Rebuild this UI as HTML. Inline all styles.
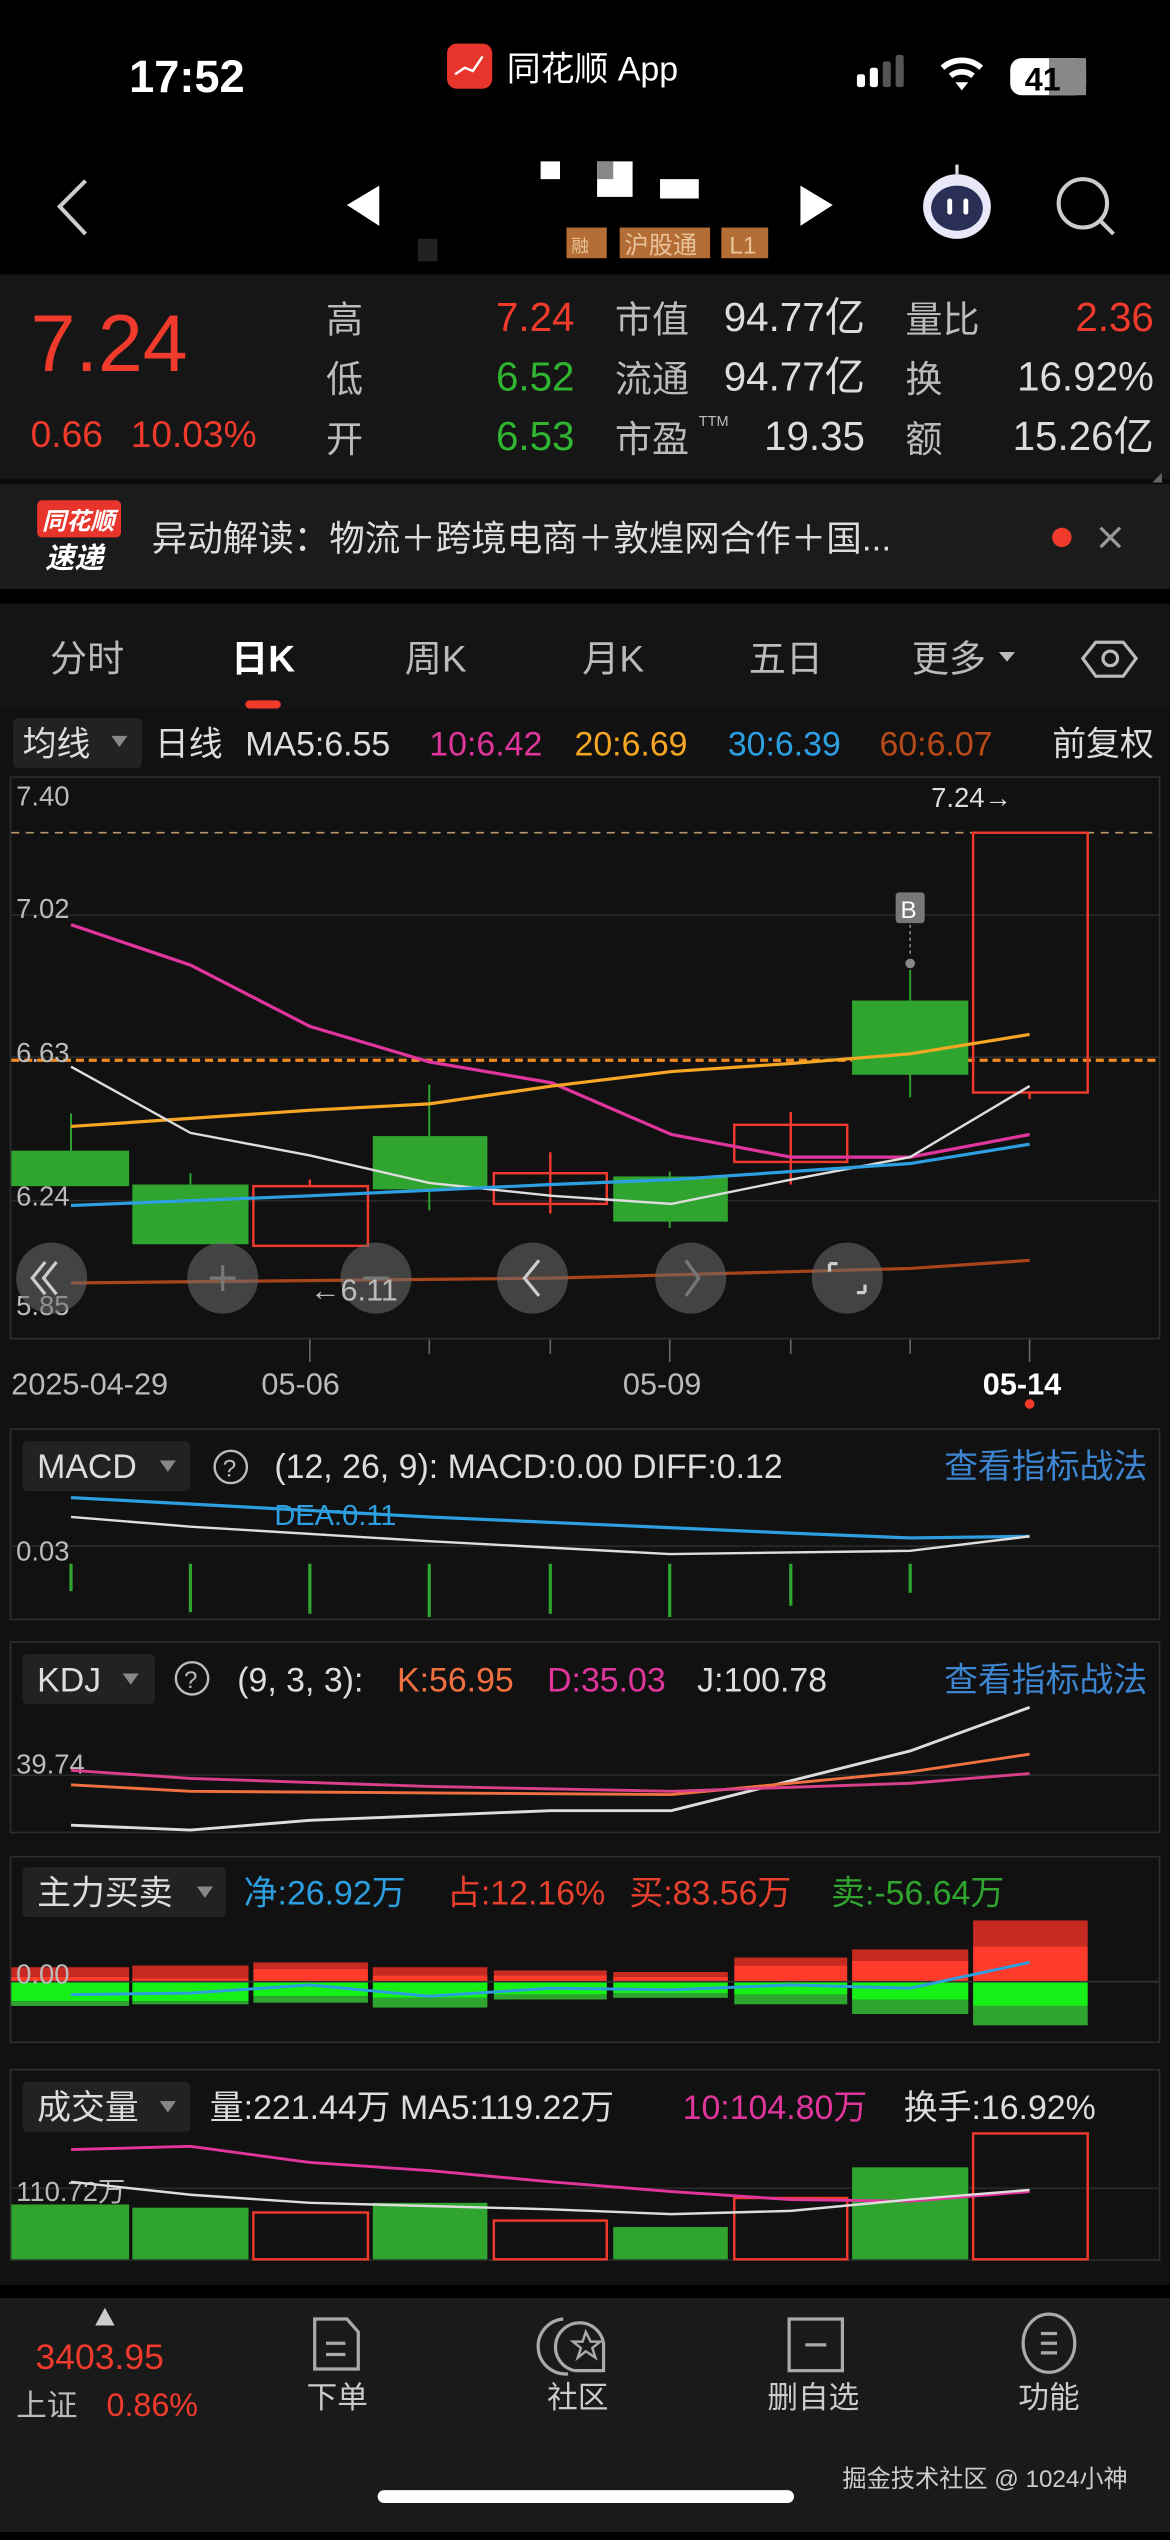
<!DOCTYPE html>
<html><head><meta charset="utf-8">
<style>
html,body{margin:0;padding:0;background:#000;}
body{width:1170px;height:2532px;overflow:hidden;position:relative;}
#w{position:absolute;left:0;top:0;width:725px;height:1569px;transform:scale(1.61379);transform-origin:0 0;}
svg text{font-family:"Liberation Sans","Noto Sans CJK SC",sans-serif;}
</style></head><body><div id="w">
<svg width="725" height="1569" viewBox="0 0 725 1569" xmlns="http://www.w3.org/2000/svg">
<rect width="725" height="1569" fill="#000"/>
<!-- status bar -->
<text x="80" y="57" font-size="28" font-weight="bold" fill="#fff">17:52</text>
<rect x="277" y="27" width="28" height="28" rx="6" fill="#e8352b"/>
<path d="M282 46 L288 42 L293 44 L299 35" stroke="#fff" stroke-width="1.5" fill="none"/>
<text x="314" y="50" font-size="21" fill="#fff">同花顺 App</text>
<rect x="531" y="46" width="5" height="8" rx="1.5" fill="#fff"/>
<rect x="539" y="42" width="5" height="12" rx="1.5" fill="#fff"/>
<rect x="547" y="38" width="5" height="16" rx="1.5" fill="#555"/>
<rect x="555" y="34" width="5" height="20" rx="1.5" fill="#555"/>
<path d="M584 42 A18 18 0 0 1 608 42" stroke="#fff" stroke-width="3.5" fill="none"/>
<path d="M589 47 A11 11 0 0 1 603 47" stroke="#fff" stroke-width="3.5" fill="none"/>
<path d="M592 51 L596 56 L600 51 Z" fill="#fff"/>
<rect x="626" y="36" width="47" height="23" rx="7" fill="#fff"/>
<rect x="650" y="36" width="23" height="23" fill="#888"/>
<text x="635" y="56" font-size="20" font-weight="bold" fill="#000">41</text>
<!-- nav -->
<path d="M53 112 L37 128 L53 145" stroke="#ccc" stroke-width="2.5" fill="none"/>
<path d="M235 115 L215 127 L235 140 Z" fill="#fff"/>
<path d="M496 115 L516 127 L496 140 Z" fill="#fff"/>
<rect x="335" y="100" width="12" height="11" fill="#fff"/>
<rect x="370" y="100" width="22" height="22" fill="#fff"/><rect x="370" y="100" width="10" height="11" fill="#888"/>
<rect x="409" y="111" width="24" height="12" fill="#fff"/>
<rect x="259" y="148" width="12" height="14" fill="#222"/>
<rect x="351" y="141" width="25" height="19" fill="#b46d34"/><text x="354" y="156" font-size="11" fill="#e8c39b">融</text>
<rect x="384" y="141" width="56" height="19" fill="#b46d34"/><text x="387" y="157" font-size="15" fill="#e8c39b">沪股通</text>
<rect x="447" y="141" width="29" height="19" fill="#b46d34"/><text x="452" y="157" font-size="15" fill="#e8c39b">L1</text>
<ellipse cx="593" cy="128" rx="21" ry="20" fill="#e8e8f8"/>
<ellipse cx="593" cy="129" rx="16" ry="14" fill="#2a3055"/>
<rect x="587" y="123" width="3" height="10" rx="1.5" fill="#fff"/><rect x="597" y="123" width="3" height="10" rx="1.5" fill="#fff"/>
<path d="M593 108 L593 102" stroke="#ddd" stroke-width="2"/>
<circle cx="671" cy="126" r="15" stroke="#ccc" stroke-width="2.5" fill="none"/>
<path d="M682 137 L690 145" stroke="#ccc" stroke-width="2.5"/>
<!-- quote panel -->
<rect x="0" y="170" width="725" height="128" fill="#161616"/>
<rect x="0" y="297" width="725" height="3" fill="#0a0a0a"/>
<text x="19" y="230" font-size="50" fill="#f03a2c">7.24</text>
<text x="19" y="277" font-size="23" fill="#f03a2c">0.66</text>
<text x="81" y="277" font-size="23" fill="#f03a2c">10.03%</text>
<g font-size="23" fill="#bbb"><text x="202" y="206">高</text><text x="202" y="243">低</text><text x="202" y="280">开</text>
<text x="381" y="206">市值</text><text x="381" y="243">流通</text><text x="381" y="280">市盈</text>
<text x="561" y="206">量比</text><text x="561" y="243">换</text><text x="561" y="280">额</text></g>
<text x="433" y="264" font-size="9" fill="#bbb">TTM</text>
<g font-size="25" text-anchor="end"><text x="356" y="205" fill="#f03a2c">7.24</text><text x="356" y="242" fill="#2fb52f">6.52</text><text x="356" y="279" fill="#2fb52f">6.53</text>
<text x="536" y="205" fill="#ddd">94.77亿</text><text x="536" y="242" fill="#ddd">94.77亿</text><text x="536" y="279" fill="#ddd">19.35</text>
<text x="715" y="205" fill="#f03a2c">2.36</text><text x="715" y="242" fill="#ddd">16.92%</text><text x="715" y="279" fill="#ddd">15.26亿</text></g>
<path d="M720 293 L714 299 L720 299 Z" fill="#666"/>
<!-- news -->
<rect x="0" y="300" width="725" height="65" fill="#1b1b1b"/>
<rect x="23" y="310" width="52" height="23" rx="3" fill="#e8352b"/>
<text x="26" y="328" font-size="15" font-style="italic" font-weight="bold" fill="#fff">同花顺</text>
<text x="28" y="352" font-size="18" font-style="italic" font-weight="bold" fill="#fff">速递</text>
<text x="94" y="341" font-size="22" fill="#ddd">异动解读：物流＋跨境电商＋敦煌网合作＋国...</text>
<circle cx="658" cy="333" r="6" fill="#f03a2c"/>
<path d="M682 327 L694 339 M694 327 L682 339" stroke="#999" stroke-width="2"/>
<!-- tabs -->
<rect x="0" y="374" width="725" height="66" fill="#141414"/>
<g font-size="23" fill="#bbb" text-anchor="middle"><text x="54" y="416">分时</text><text x="163" y="416" fill="#fff" font-weight="bold">日K</text><text x="270" y="416">周K</text><text x="380" y="416">月K</text><text x="487" y="416">五日</text><text x="588" y="416">更多</text></g>
<path d="M619 404 L629 404 L624 410 Z" fill="#bbb"/>
<path d="M679 398 L696 398 L704 408 L696 419 L679 419 L671 408 Z" stroke="#bbb" stroke-width="2" fill="none"/>
<circle cx="688" cy="408" r="4.5" stroke="#bbb" stroke-width="2" fill="none"/>
<rect x="152" y="434" width="22" height="5" rx="2.5" fill="#f03a2c"/>
<!-- chart area bg -->
<rect x="0" y="440" width="725" height="976" fill="#111"/>
<rect x="8" y="445" width="80" height="31" rx="3" fill="#222"/>
<text x="14" y="468" font-size="21" fill="#ddd">均线</text><path d="M69 456 L79 456 L74 463 Z" fill="#888"/>
<g font-size="21"><text x="96" y="468" fill="#ddd">日线</text><text x="152" y="468" fill="#ddd">MA5:6.55</text><text x="266" y="468" fill="#e0359c">10:6.42</text><text x="356" y="468" fill="#f5a623">20:6.69</text><text x="451" y="468" fill="#2d9fe0">30:6.39</text><text x="545" y="468" fill="#b84a1a">60:6.07</text><text x="652" y="468" fill="#ddd">前复权</text></g>
<rect x="6.5" y="481.5" width="712" height="348" fill="none" stroke="#2e2e2e"/>
<g stroke="#2a2a2a"><line x1="7" y1="567" x2="718" y2="567"/><line x1="7" y1="655" x2="718" y2="655"/><line x1="7" y1="744" x2="718" y2="744"/></g>
<line x1="7" y1="516" x2="718" y2="516" stroke="#b8956a" stroke-dasharray="5,4"/>
<line x1="7" y1="657" x2="718" y2="657" stroke="#f08a20" stroke-width="2" stroke-dasharray="5,3"/>
<g font-size="17" fill="#bbb"><text x="10" y="499">7.40</text><text x="10" y="569">7.02</text><text x="10" y="658">6.63</text><text x="10" y="747">6.24</text><text x="10" y="815">5.85</text></g>
<text x="577" y="500" font-size="17" fill="#ddd">7.24→</text>
<!-- candles -->
<g stroke="#2fa52f" stroke-width="1.2"><line x1="44" y1="690" x2="44" y2="713"/><line x1="118" y1="727" x2="118" y2="734"/><line x1="266" y1="672" x2="266" y2="750"/><line x1="415" y1="726" x2="415" y2="761"/><line x1="564" y1="601" x2="564" y2="680"/></g>
<g fill="#2fa52f"><rect x="7" y="713" width="73" height="22"/><rect x="82" y="734" width="72" height="37"/><rect x="231" y="704" width="71" height="33"/><rect x="380" y="729" width="71" height="28"/><rect x="528" y="620" width="72" height="46"/></g>
<g stroke="#f03a2c" stroke-width="1.5" fill="none"><line x1="192" y1="731" x2="192" y2="735"/><rect x="157" y="735" width="71" height="37"/><line x1="341" y1="714" x2="341" y2="752"/><rect x="306" y="727" width="70" height="19"/><line x1="490" y1="689" x2="490" y2="734"/><rect x="455" y="697" width="70" height="23"/><rect x="603" y="516" width="71" height="161"/><line x1="638" y1="677" x2="638" y2="681"/></g>
<rect x="555" y="553" width="18" height="19" rx="2" fill="#777"/><text x="558" y="569" font-size="15" fill="#fff">B</text>
<line x1="564" y1="573" x2="564" y2="593" stroke="#888" stroke-dasharray="2,2"/><circle cx="564" cy="597" r="3" fill="#888"/>
<!-- MA lines -->
<g fill="none" stroke-width="2">
<polyline stroke="#e0359c" points="44,573 118,598 192,636 266,658 342,671 416,703 490,717 564,717 638,703"/>
<polyline stroke="#f5a623" points="44,698 118,693 192,688 266,684 342,673 416,664 490,659 564,653 638,641"/>
<polyline stroke="#ddd" stroke-width="1.5" points="44,661 118,702 192,716 266,733 342,741 416,746 490,731 564,717 638,673"/>
<polyline stroke="#2d9fe0" points="44,747 192,741 342,734 416,731 564,721 638,709"/>
<polyline stroke="#a8441a" points="44,795 342,792 564,786 638,781"/>
</g>
<!-- overlay buttons -->
<g fill="rgba(110,110,110,0.55)"><circle cx="32" cy="792" r="22"/><circle cx="138" cy="792" r="22"/><circle cx="233" cy="792" r="22"/><circle cx="330" cy="792" r="22"/><circle cx="428" cy="792" r="22"/><circle cx="525" cy="792" r="22"/></g>
<g stroke="#ccc" stroke-width="2" fill="none"><path d="M28 782 L20 792 L28 802 M35 782 L27 792 L35 802"/><path d="M334 781 L325 792 L334 803"/><path d="M514 783 L514 788 M514 783 L519 783 M536 801 L536 796 M536 801 L531 801"/></g>
<g stroke="#777" stroke-width="2" fill="none"><path d="M138 784 L138 800 M130 792 L146 792"/><path d="M425 781 L433 792 L425 803"/><path d="M225 792 L241 792"/></g>
<text x="192" y="806" font-size="19" fill="#bbb">←6.11</text>
<!-- date axis -->
<g stroke="#666"><line x1="192" y1="830" x2="192" y2="844"/><line x1="266" y1="830" x2="266" y2="839"/><line x1="341" y1="830" x2="341" y2="839"/><line x1="415" y1="830" x2="415" y2="844"/><line x1="490" y1="830" x2="490" y2="839"/><line x1="564" y1="830" x2="564" y2="839"/><line x1="638" y1="830" x2="638" y2="844"/></g>
<g font-size="19" fill="#bbb"><text x="7" y="864">2025-04-29</text><text x="162" y="864">05-06</text><text x="386" y="864">05-09</text><text x="609" y="864" fill="#fff" font-weight="bold">05-14</text></g>
<circle cx="638" cy="870" r="3" fill="#f03a2c"/>
<!-- MACD -->
<rect x="6.5" y="885.5" width="712" height="118" fill="none" stroke="#2e2e2e"/>
<line x1="7" y1="958" x2="718" y2="958" stroke="#2a2a2a"/>
<rect x="14" y="893" width="104" height="31" rx="3" fill="#222"/><text x="23" y="916" font-size="21" fill="#ddd">MACD</text><path d="M99 905 L109 905 L104 912 Z" fill="#888"/>
<circle cx="143" cy="909" r="10" stroke="#bbb" stroke-width="1.5" fill="none"/><text x="138" y="915" font-size="15" fill="#bbb">?</text>
<text x="170" y="916" font-size="21" fill="#ddd">(12, 26, 9): MACD:0.00  DIFF:0.12</text>
<text x="585" y="916" font-size="21" fill="#3d85d0">查看指标战法</text>
<polyline fill="none" stroke="#2d9fe0" stroke-width="2" points="44,928 266,940 490,950 564,953 638,952"/>
<polyline fill="none" stroke="#ddd" stroke-width="1.5" points="44,940 118,946 266,955 415,963 564,961 638,952"/>
<text x="170" y="945" font-size="18" fill="#2d9fe0">DEA:0.11</text>
<text x="10" y="967" font-size="17" fill="#bbb">0.03</text>
<g stroke="#2fa52f" stroke-width="2"><line x1="44" y1="969" x2="44" y2="986"/><line x1="118" y1="969" x2="118" y2="999"/><line x1="192" y1="969" x2="192" y2="1000"/><line x1="266" y1="969" x2="266" y2="1002"/><line x1="341" y1="969" x2="341" y2="1000"/><line x1="415" y1="969" x2="415" y2="1002"/><line x1="490" y1="969" x2="490" y2="995"/><line x1="564" y1="969" x2="564" y2="987"/></g>
<!-- KDJ -->
<rect x="6.5" y="1017.5" width="712" height="118" fill="none" stroke="#2e2e2e"/>
<line x1="7" y1="1100" x2="718" y2="1100" stroke="#2a2a2a"/>
<rect x="14" y="1025" width="82" height="31" rx="3" fill="#222"/><text x="23" y="1048" font-size="21" fill="#ddd">KDJ</text><path d="M76 1037 L86 1037 L81 1044 Z" fill="#888"/>
<circle cx="119" cy="1040" r="10" stroke="#bbb" stroke-width="1.5" fill="none"/><text x="114" y="1046" font-size="15" fill="#bbb">?</text>
<text x="147" y="1048" font-size="21" fill="#ddd">(9, 3, 3):</text><text x="246" y="1048" font-size="21" fill="#f07040">K:56.95</text><text x="339" y="1048" font-size="21" fill="#e0359c">D:35.03</text><text x="432" y="1048" font-size="21" fill="#ddd">J:100.78</text>
<text x="585" y="1048" font-size="21" fill="#3d85d0">查看指标战法</text>
<text x="10" y="1099" font-size="17" fill="#bbb">39.74</text>
<g fill="none" stroke-width="1.8"><polyline stroke="#ddd" points="44,1131 118,1134 192,1128 341,1122 416,1122 564,1085 638,1058"/><polyline stroke="#f07040" points="44,1106 118,1110 266,1111 416,1112 564,1098 638,1087"/><polyline stroke="#d8408a" points="44,1097 118,1102 266,1107 416,1110 564,1105 638,1099"/></g>
<!-- 主力 -->
<rect x="6.5" y="1150.5" width="712" height="115" fill="none" stroke="#2e2e2e"/>
<rect x="14" y="1157" width="126" height="31" rx="3" fill="#222"/><text x="23" y="1180" font-size="21" fill="#ddd">主力买卖</text><path d="M122 1169 L132 1169 L127 1176 Z" fill="#888"/>
<g font-size="21"><text x="151" y="1180" fill="#2d9fe0">净:26.92万</text><text x="277" y="1180" fill="#e8402c">占:12.16%</text><text x="390" y="1180" fill="#e8402c">买:83.56万</text><text x="515" y="1180" fill="#2fa52f">卖:-56.64万</text></g>
<g>
<rect x="7" y="1219" width="73" height="6" fill="#c62a20"/><rect x="7" y="1225" width="73" height="3" fill="#ff3b2c"/><rect x="7" y="1228" width="73" height="12" fill="#16f016"/><rect x="7" y="1240" width="73" height="3" fill="#2fa52f"/>
<rect x="82" y="1218" width="72" height="8" fill="#c62a20"/><rect x="82" y="1226" width="72" height="2" fill="#ff3b2c"/><rect x="82" y="1228" width="72" height="12" fill="#16f016"/><rect x="82" y="1240" width="72" height="2" fill="#2fa52f"/>
<rect x="157" y="1216" width="71" height="4" fill="#c62a20"/><rect x="157" y="1220" width="71" height="8" fill="#ff3b2c"/><rect x="157" y="1228" width="71" height="9" fill="#16f016"/><rect x="157" y="1237" width="71" height="4" fill="#2fa52f"/>
<rect x="231" y="1219" width="71" height="5" fill="#c62a20"/><rect x="231" y="1224" width="71" height="4" fill="#ff3b2c"/><rect x="231" y="1228" width="71" height="10" fill="#16f016"/><rect x="231" y="1238" width="71" height="6" fill="#2fa52f"/>
<rect x="306" y="1221" width="70" height="3" fill="#c62a20"/><rect x="306" y="1224" width="70" height="4" fill="#ff3b2c"/><rect x="306" y="1228" width="70" height="8" fill="#16f016"/><rect x="306" y="1236" width="70" height="3" fill="#2fa52f"/>
<rect x="380" y="1222" width="71" height="3" fill="#c62a20"/><rect x="380" y="1225" width="71" height="3" fill="#ff3b2c"/><rect x="380" y="1228" width="71" height="7" fill="#16f016"/><rect x="380" y="1235" width="71" height="3" fill="#2fa52f"/>
<rect x="455" y="1213" width="70" height="5" fill="#c62a20"/><rect x="455" y="1218" width="70" height="10" fill="#ff3b2c"/><rect x="455" y="1228" width="70" height="8" fill="#16f016"/><rect x="455" y="1236" width="70" height="6" fill="#2fa52f"/>
<rect x="528" y="1208" width="72" height="7" fill="#c62a20"/><rect x="528" y="1215" width="72" height="13" fill="#ff3b2c"/><rect x="528" y="1228" width="72" height="11" fill="#16f016"/><rect x="528" y="1239" width="72" height="9" fill="#2fa52f"/>
<rect x="603" y="1190" width="71" height="16" fill="#c62a20"/><rect x="603" y="1206" width="71" height="22" fill="#ff3b2c"/><rect x="603" y="1228" width="71" height="15" fill="#16f016"/><rect x="603" y="1243" width="71" height="12" fill="#2fa52f"/>
</g>
<line x1="7" y1="1228" x2="718" y2="1228" stroke="#333"/>
<text x="10" y="1229" font-size="17" fill="#bbb">0.00</text>
<polyline fill="none" stroke="#2d9fe0" stroke-width="1.8" points="44,1236 118,1235 192,1230 266,1237 341,1232 416,1233 490,1230 564,1232 638,1216"/>
<!-- volume -->
<rect x="6.5" y="1282.5" width="712" height="118" fill="none" stroke="#2e2e2e"/>
<line x1="7" y1="1356" x2="718" y2="1356" stroke="#2a2a2a"/>
<rect x="14" y="1290" width="104" height="31" rx="3" fill="#222"/><text x="23" y="1313" font-size="21" fill="#ddd">成交量</text><path d="M99 1302 L109 1302 L104 1309 Z" fill="#888"/>
<g font-size="21"><text x="130" y="1313" fill="#ddd">量:221.44万  MA5:119.22万</text><text x="423" y="1313" fill="#e0359c">10:104.80万</text><text x="560" y="1313" fill="#ddd">换手:16.92%</text></g>
<g fill="#2fa52f"><rect x="7" y="1366" width="73" height="34"/><rect x="82" y="1368" width="72" height="32"/><rect x="231" y="1365" width="71" height="35"/><rect x="380" y="1380" width="71" height="20"/><rect x="528" y="1343" width="72" height="57"/></g>
<g fill="none" stroke="#f03a2c" stroke-width="1.5"><rect x="157" y="1371" width="71" height="29"/><rect x="306" y="1376" width="70" height="24"/><rect x="455" y="1362" width="70" height="38"/><rect x="603" y="1322" width="71" height="78"/></g>
<text x="10" y="1364" font-size="17" fill="#bbb">110.72万</text>
<g fill="none" stroke-width="1.8"><polyline stroke="#e0359c" points="44,1332 118,1330 192,1340 266,1345 341,1352 416,1358 490,1363 564,1364 638,1358"/><polyline stroke="#ddd" stroke-width="1.5" points="44,1352 118,1360 192,1365 341,1369 416,1372 490,1370 564,1363 638,1357"/></g>
<!-- bottom bar -->
<rect x="0" y="1416" width="725" height="8" fill="#000"/>
<rect x="0" y="1424" width="725" height="145" fill="#1a1a1a"/>
<path d="M65 1430 L71 1441 L59 1441 Z" fill="#ccc"/>
<text x="22" y="1468" font-size="22" fill="#f03a2c">3403.95</text>
<text x="10" y="1497" font-size="19" fill="#bbb">上证</text><text x="66" y="1497" font-size="20" fill="#f03a2c">0.86%</text>
<g stroke="#aaa" stroke-width="2" fill="none">
<path d="M195 1437 L215 1437 L222 1445 L222 1468 L195 1468 Z"/><path d="M202 1452 L214 1452 M202 1459 L214 1459"/>
<path d="M349 1437 A15 15 0 0 0 352 1471"/><path d="M356 1469 L374 1469 L374 1452 A15 15 0 1 0 356 1469"/>
<path d="M363 1445 L366 1451 L372 1451 L367 1455 L369 1461 L363 1457 L358 1461 L360 1455 L355 1451 L361 1451 Z" stroke-width="1.5"/>
<rect x="489" y="1437" width="33" height="32"/><path d="M499 1453 L512 1453"/>
<ellipse cx="650" cy="1452" rx="16" ry="18"/><path d="M645 1446 L655 1446 M645 1452 L655 1452 M645 1458 L655 1458"/>
</g>
<g font-size="19" fill="#ccc" text-anchor="middle"><text x="209" y="1492">下单</text><text x="358" y="1492">社区</text><text x="504" y="1492">删自选</text><text x="650" y="1492">功能</text></g>
<text x="522" y="1541" font-size="15" fill="#ccc">掘金技术社区 @ 1024小神</text>
<rect x="234" y="1543" width="258" height="8" rx="4" fill="#fff"/>
</svg>
</div></body></html>
